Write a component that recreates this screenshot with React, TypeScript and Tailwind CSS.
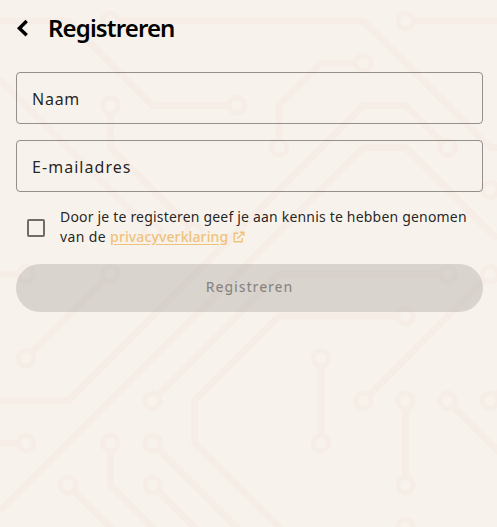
import React from 'react';

const TRACES = [
  'M0 21H68L152.5 105.4H237',
  'M110.4 21H363.3L490 147.6H497',
  'M405.5 21H497',
  'M363.3 63H321L279 105.4V147.6',
  'M0 79.5L152.5 232',
  'M110.4 105.4V147.6L194.7 232',
  'M447.7 147.6L405.5 105.4H363.3L68 400.7H0',
  'M0 510.9L363.3 147.6H405.5L497 239',
  'M447.7 274H279L152.5 400.7',
  'M405.5 316.3H279L194.7 400.7V443L281 529',
  'M490 274L363.3 400.7',
  'M110.4 274L26 358.5',
  'M0 274H26',
  'M0 443H26',
  'M110.4 443V485L156 531',
  'M68 485L114 531',
  'M152.5 443L240.5 531',
  'M152.5 485L198.5 531',
  'M321 358.5V443',
  'M405.5 400.7V485',
  'M447.7 400.7L500 453',
  'M490 400.7L500 390.7',
];

const NODES = [
  [110.4, 21], [405.5, 21], [363.3, 63], [110.4, 105.4], [237, 105.4],
  [279, 147.6], [447.7, 147.6], [490, 190], [152.5, 232], [194.7, 232],
  [26, 274], [110.4, 274], [447.7, 274], [490, 274], [405.5, 316.3],
  [26, 358.5], [321, 358.5], [152.5, 400.7], [363.3, 400.7], [405.5, 400.7],
  [447.7, 400.7], [490, 400.7], [26, 443], [110.4, 443], [152.5, 443],
  [321, 443], [68, 485], [152.5, 485], [405.5, 485], [405.5, 527],
];

const CircuitBackground = () => (
  <svg className="absolute inset-0 -z-10" width="497" height="527" viewBox="0 0 497 527" fill="none" aria-hidden="true">
    <path d={TRACES.join('')} stroke="#f6ede7" strokeWidth="7" />
    {NODES.map(([x, y]) => (
      <circle key={`${x}-${y}`} cx={x} cy={y} r="7.8" fill="#f7f2eb" stroke="#f6ede7" strokeWidth="5" />
    ))}
  </svg>
);

const Field = ({ label, spacing }: { label: string; spacing: string }) => (
  <label className="flex h-[52px] items-center rounded-[4px] border border-black/40 px-[15px] pt-0.5">
    <span className={`text-base leading-6 text-black/87 ${spacing}`}>{label}</span>
  </label>
);

const App = () => {
  return (
    <div className="relative isolate h-[527px] w-[497px] overflow-hidden bg-[#f7f2eb] pl-4 pr-[14px] font-['Noto_Sans','Open_Sans',sans-serif]">
      <CircuitBackground />

      {/* Title bar */}
      <header className="flex h-14 items-center">
        <button className="w-8" aria-label="Terug">
          <svg width="13" height="18" viewBox="0 0 13 18" fill="none" stroke="#000" strokeWidth="3.4">
            <path d="M10.7 2L3.4 9.2L10.7 16.2" />
          </svg>
        </button>
        <h1 className="whitespace-nowrap text-2xl font-semibold leading-8 tracking-[-0.87px] text-black">Registreren</h1>
      </header>

      <form className="mt-4 flex flex-col">
        <div className="flex flex-col gap-4">
          <Field label="Naam" spacing="tracking-[0.75px]" />
          <Field label="E-mailadres" spacing="tracking-[1.05px]" />
        </div>

        {/* Consent */}
        <div className="mt-[15px] flex items-center">
          <span className="ml-[11px] mt-0.5 h-[18px] w-[18px] shrink-0 rounded-[2px] border-2 border-black/55" />
          <p className="ml-[15px] whitespace-nowrap text-sm leading-5 text-black/87">
            <span className="block tracking-[0.19px]">Door je te registeren geef je aan kennis te hebben genomen</span>
            <span className="flex items-center">
              <span className="tracking-[0.38px]">van de&nbsp;</span>
              <a className="font-medium tracking-[0.12px] text-[#efc27c] underline underline-offset-2">privacyverklaring</a>
              <svg className="ml-[5px]" width="12" height="12" viewBox="0 0 12 12" fill="none" stroke="#efc27c" strokeWidth="1.4">
                <path d="M5 2.2H1.2V10.8H9.2V7M7 1.2H10.8V5M10.8 1.2L4.2 7.8" />
              </svg>
            </span>
          </p>
        </div>

        <button
          type="button"
          disabled
          className="mt-[17px] flex h-12 items-center justify-center rounded-full bg-black/12 pb-0.5 text-sm font-medium tracking-[0.88px] text-black/38"
        >
          Registreren
        </button>
      </form>
    </div>
  );
};

export default App;
